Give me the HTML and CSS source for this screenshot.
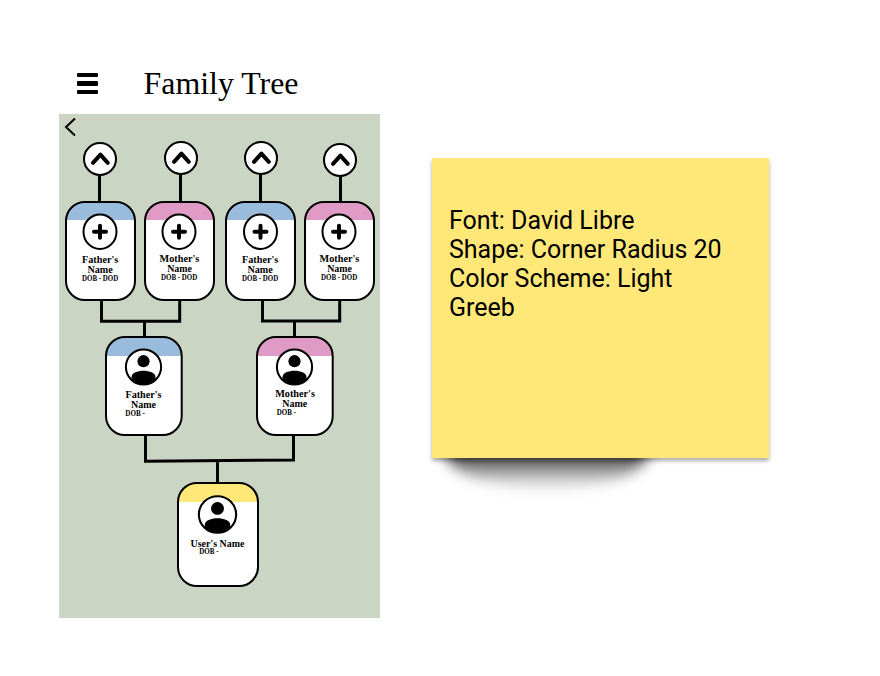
FILE: index.html
```html
<!DOCTYPE html>
<html lang="en">
<head>
<meta charset="utf-8">
<title>Family Tree</title>
<link rel="stylesheet" href="styles.css">
</head>
<body>
<main class="board">
  <section class="app">
    <header class="topbar">
      <div class="menu"><span></span><span></span><span></span></div>
      <svg class="title" width="160" height="40" viewBox="0 0 160 40"><text x="0.5" y="30" textLength="155" lengthAdjust="spacingAndGlyphs">Family Tree</text></svg>
    </header>
    <svg class="tree" width="321" height="504" viewBox="59 114 321 504">
      <defs>
        <clipPath id="clip-s"><rect x="1" y="1" width="69" height="98" rx="19"/></clipPath>
        <clipPath id="clip-m"><rect x="1" y="1" width="76" height="98" rx="19"/></clipPath>
        <clipPath id="clip-l"><rect x="1" y="1" width="80" height="103" rx="19"/></clipPath>
        <clipPath id="clip-face"><circle r="17.8"/></clipPath>
        <g id="up"><circle class="disc" r="16"/><path class="chevron" d="M-7 3.800 0.400 -4.400 7.800 3.800"/></g>
        <g id="plus"><ellipse class="disc" rx="16.5" ry="17.3"/><path class="cross" d="M-6 0H6M0 -6V6"/></g>
        <g id="face">
          <circle class="face" r="17.6"/>
          <circle cx="0" cy="-5.8" r="6.1"/>
          <path clip-path="url(#clip-face)" d="M-12 10C-12 1.500 12 1.500 12 10V18H-12Z"/>
          <circle class="ring" r="17.6"/>
        </g>
      </defs>

      <path class="back" d="M75 118.500 66 127 75 135.500"/>

      <path class="link" d="M99.500 175V202M180.500 174V202M260.500 174V202M340.500 176V202"/>
      <path class="link" d="M101.500 300V321.300H179.700V300M144.500 321.300V337"/>
      <path class="link" d="M262.500 300V321H339.700V300M294.500 321V337"/>
      <path class="link" d="M145.500 435V461.200L293.500 460V435M217.500 461V483"/>

      <use href="#up" x="100" y="159"/>
      <use href="#up" x="181" y="158"/>
      <use href="#up" x="261" y="158"/>
      <use href="#up" x="340" y="160"/>

      <g transform="translate(65 201)">
        <g clip-path="url(#clip-s)"><rect class="paper" width="71" height="100"/><rect class="blue" width="71" height="19"/></g>
        <rect class="edge" x="1" y="1" width="69" height="98" rx="19"/>
      </g>
      <use href="#plus" x="100" y="231.700"/>
      <text class="name" x="82" y="263" textLength="36.300" lengthAdjust="spacingAndGlyphs">Father's</text>
      <text class="name" x="87.400" y="273" textLength="25.300" lengthAdjust="spacingAndGlyphs">Name</text>
      <text class="dates" x="82" y="280.800" textLength="36.300" lengthAdjust="spacingAndGlyphs">DOB - DOD</text>

      <g transform="translate(144 201)">
        <g clip-path="url(#clip-s)"><rect class="paper" width="71" height="100"/><rect class="pink" width="71" height="19"/></g>
        <rect class="edge" x="1" y="1" width="69" height="98" rx="19"/>
      </g>
      <use href="#plus" x="179" y="231.700"/>
      <text class="name" x="159.600" y="262.200" textLength="39.700" lengthAdjust="spacingAndGlyphs">Mother's</text>
      <text class="name" x="167.200" y="272.200" textLength="24.800" lengthAdjust="spacingAndGlyphs">Name</text>
      <text class="dates" x="161" y="280" textLength="36.300" lengthAdjust="spacingAndGlyphs">DOB - DOD</text>

      <g transform="translate(225 201)">
        <g clip-path="url(#clip-s)"><rect class="paper" width="71" height="100"/><rect class="blue" width="71" height="19"/></g>
        <rect class="edge" x="1" y="1" width="69" height="98" rx="19"/>
      </g>
      <use href="#plus" x="260.500" y="231.700"/>
      <text class="name" x="242" y="263" textLength="36.300" lengthAdjust="spacingAndGlyphs">Father's</text>
      <text class="name" x="247.400" y="273" textLength="25.300" lengthAdjust="spacingAndGlyphs">Name</text>
      <text class="dates" x="242" y="280.800" textLength="36.300" lengthAdjust="spacingAndGlyphs">DOB - DOD</text>

      <g transform="translate(304 201)">
        <g clip-path="url(#clip-s)"><rect class="paper" width="71" height="100"/><rect class="pink" width="71" height="19"/></g>
        <rect class="edge" x="1" y="1" width="69" height="98" rx="19"/>
      </g>
      <use href="#plus" x="339" y="231.700"/>
      <text class="name" x="319.600" y="262.200" textLength="39.700" lengthAdjust="spacingAndGlyphs">Mother's</text>
      <text class="name" x="327.200" y="272.200" textLength="24.800" lengthAdjust="spacingAndGlyphs">Name</text>
      <text class="dates" x="321" y="280" textLength="36.300" lengthAdjust="spacingAndGlyphs">DOB - DOD</text>

      <g transform="translate(105 336)">
        <g clip-path="url(#clip-m)"><rect class="paper" width="78" height="100"/><rect class="blue" width="78" height="20"/></g>
        <rect class="edge" x="1" y="1" width="75.700" height="98" rx="19"/>
      </g>
      <use href="#face" x="143.500" y="367"/>
      <text class="name" x="125.500" y="398" textLength="36" lengthAdjust="spacingAndGlyphs">Father's</text>
      <text class="name" x="131" y="408" textLength="25" lengthAdjust="spacingAndGlyphs">Name</text>
      <text class="dates" x="125.300" y="415.600" textLength="19.500" lengthAdjust="spacingAndGlyphs">DOB -</text>

      <g transform="translate(256 336)">
        <g clip-path="url(#clip-m)"><rect class="paper" width="78" height="100"/><rect class="pink" width="78" height="20"/></g>
        <rect class="edge" x="1" y="1" width="75.700" height="98" rx="19"/>
      </g>
      <use href="#face" x="294.500" y="367"/>
      <text class="name" x="275.200" y="397" textLength="39.700" lengthAdjust="spacingAndGlyphs">Mother's</text>
      <text class="name" x="282.200" y="407" textLength="25" lengthAdjust="spacingAndGlyphs">Name</text>
      <text class="dates" x="276.700" y="415" textLength="19.300" lengthAdjust="spacingAndGlyphs">DOB -</text>

      <g transform="translate(177 482)">
        <g clip-path="url(#clip-l)"><rect class="paper" width="82" height="105"/><rect class="yellow" width="82" height="20"/></g>
        <rect class="edge" x="1" y="1" width="80" height="103" rx="19"/>
      </g>
      <use href="#face" transform="translate(217.500 514.500) scale(1.060 1.040)"/>
      <text class="name" x="190.600" y="546.600" textLength="53.700" lengthAdjust="spacingAndGlyphs">User's Name</text>
      <text class="dates" x="199.300" y="554.400" textLength="19.300" lengthAdjust="spacingAndGlyphs">DOB -</text>
    </svg>
  </section>

  <aside class="note">
    <p>Font: David Libre<br>Shape: Corner Radius 20<br>Color Scheme: Light<br>Greeb</p>
  </aside>
</main>
</body>
</html>
```
FILE: styles.css
```css
* { box-sizing: border-box; }
body { margin: 0; background: #fff; color: #000; overflow: hidden; }
.board { display: flex; align-items: flex-start; gap: 52px; height: 676px; padding: 58px 0 0 59px; }
.app { width: 321px; }
.topbar { display: flex; height: 56px; padding: 6px 0 0 18px; gap: 45px; }
.menu { display: flex; flex-direction: column; gap: 4px; width: 21px; padding-top: 9px; }
.menu span { height: 4.400px; border-radius: 1px; background: #000; }
.title { display: block; flex: none; font: 31px "Liberation Serif", serif; }
.tree { display: block; background: #cad5c4; font-family: "Liberation Serif", serif; }

.link { fill: none; stroke: #000; stroke-width: 3; }
.back { fill: none; stroke: #000; stroke-width: 2; }
.disc { fill: #fff; stroke: #000; stroke-width: 2; }
.chevron { fill: none; stroke: #000; stroke-width: 4; stroke-linecap: round; stroke-linejoin: round; }
.cross { fill: none; stroke: #000; stroke-width: 4; stroke-linecap: round; }
.face { fill: #fff; }
.ring { fill: none; stroke: #000; stroke-width: 2; }
.paper { fill: #fff; }
.blue { fill: #99bbdc; }
.pink { fill: #df9bc5; }
.yellow { fill: #ffe877; }
.edge { fill: none; stroke: #000; stroke-width: 2; }
.name { font-size: 10.500px; font-weight: 700; }
.dates { font-size: 8px; font-weight: 700; }

.note { position: relative; width: 337px; height: 300px; margin-top: 100px; padding: 48px 17px; background: #ffe877; box-shadow: 0 3px 4px rgba(0, 0, 0, .32); }
.note::before { content: ""; position: absolute; z-index: -1; left: 14px; bottom: -31px; width: 202px; height: 72px; border-radius: 50%; background: linear-gradient(rgba(0, 0, 0, .8) 48%, rgba(0, 0, 0, .1) 92%); filter: blur(7px); }
.note p { margin: 0; font: 25px/29px Roboto, sans-serif; white-space: nowrap; }
```
